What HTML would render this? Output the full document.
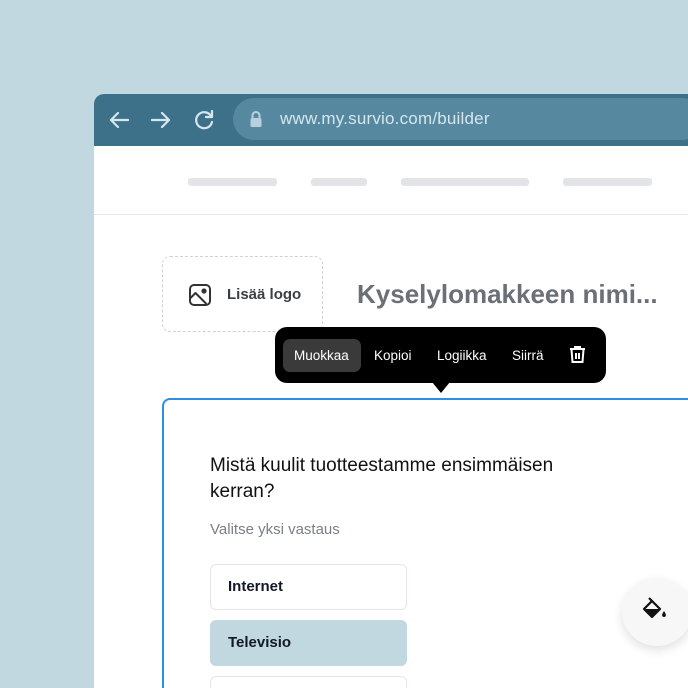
<!DOCTYPE html>
<html><head><meta charset="utf-8"><style>
*{margin:0;padding:0;box-sizing:border-box}
html,body{width:688px;height:688px;overflow:hidden}
body{background:#c2d8e0;font-family:"Liberation Sans",sans-serif}
#w{position:relative;width:688px;height:688px;overflow:hidden}
.abs{position:absolute}
.bar{left:94px;top:94px;width:600px;height:52px;background:#3d7189;border-radius:10px 0 0 0}
.addr{left:233px;top:98px;width:470px;height:42px;background:#5689a0;border-radius:21px}
.url{left:280px;top:109px;font-size:17px;color:#d6e6ee;letter-spacing:.2px}
.page{left:94px;top:146px;width:600px;height:542px;background:#fff}
.ph{top:178px;height:8px;background:#e3e4e8;border-radius:3px}
.div{left:94px;top:214px;width:600px;height:1px;background:#e5e7eb}
.logo{left:162px;top:256px;width:161px;height:76px;border:1.5px dashed #cfd2d6;border-radius:8px}
.title{left:357px;top:279px;font-size:26px;font-weight:bold;color:#6b7078}
.tb{left:275px;top:327px;width:331px;height:56px;background:#000;border-radius:12px}
.tb span{position:absolute;top:21px;color:#fff;font-size:13.5px}
.card{left:162px;top:398px;width:560px;height:320px;border:2px solid #2e8fe0;border-radius:8px}
.q{left:210px;top:453px;font-size:19px;line-height:26px;color:#111}
.sub{left:210px;top:521px;font-size:15px;color:#7a7f86}
.opt{left:210px;width:197px;height:46px;border:1.5px solid #e3e5ea;border-radius:6px;font-size:15px;font-weight:bold;color:#111827;padding:13px 0 0 17px}
</style></head><body><div id="w">
<div class="abs bar"></div>
<div class="abs addr"></div>
<svg class="abs" style="left:108px;top:108px" width="120" height="26" viewBox="0 0 120 26" fill="none" stroke="#d6e6ee" stroke-width="2.2" stroke-linecap="round" stroke-linejoin="round">
<path d="M3 12h17M10 5l-7 7 7 7"/>
<path d="M44 12h17M54 5l7 7-7 7"/>
<path d="M103 8a8 8 0 1 0 1 6"/><path d="M104 3v6h-6"/>
</svg>
<svg class="abs" style="left:249px;top:110px" width="14" height="18" viewBox="0 0 14 18"><path d="M3.5 8V5.5a3.5 3.5 0 0 1 7 0V8" fill="none" stroke="#b8d0dc" stroke-width="2"/><rect x="1.5" y="8" width="11" height="9" rx="1.5" fill="#b8d0dc"/></svg>
<div class="abs url">www.my.survio.com/builder</div>
<div class="abs page"></div>
<div class="abs ph" style="left:188px;width:89px"></div>
<div class="abs ph" style="left:311px;width:56px"></div>
<div class="abs ph" style="left:401px;width:128px"></div>
<div class="abs ph" style="left:563px;width:89px"></div>
<div class="abs div"></div>
<div class="abs logo"></div>
<svg class="abs" style="left:188px;top:283px" width="24" height="24" viewBox="0 0 24 24" fill="none" stroke="#333" stroke-width="2" stroke-linejoin="round"><rect x="2" y="2" width="20" height="20" rx="4"/><path d="M2.5 15l5-5 11 11"/><circle cx="16" cy="8" r="1.6" fill="#333"/></svg>
<div class="abs" style="left:227px;top:286px;font-size:15px;font-weight:bold;color:#3b3f45">Lisää logo</div>
<div class="abs title">Kyselylomakkeen nimi...</div>
<div class="abs tb">
<div class="abs" style="left:8px;top:12px;width:78px;height:33px;background:#3a3a3a;border-radius:7px"></div>
<span style="left:19px">Muokkaa</span>
<span style="left:99px">Kopioi</span>
<span style="left:162px">Logiikka</span>
<span style="left:237px">Siirrä</span>
<svg class="abs" style="left:294px;top:19px" width="17" height="18" viewBox="0 0 17 18" fill="none" stroke="#fff" stroke-width="2"><path d="M1 3h15M6 3V1h5v2"/><path d="M2.5 3.5l1 12.5h10l1-12.5"/><path d="M7 7v6M10 7v6"/></svg>
</div>
<div class="abs" style="left:432px;top:382px;width:0;height:0;border-left:9px solid transparent;border-right:9px solid transparent;border-top:11px solid #000"></div>
<div class="abs card"></div>
<div class="abs q">Mistä kuulit tuotteestamme ensimmäisen<br>kerran?</div>
<div class="abs sub">Valitse yksi vastaus</div>
<div class="abs opt" style="top:564px;background:#fff">Internet</div>
<div class="abs opt" style="top:620px;background:#c2d8e0;border-color:#c2d8e0">Televisio</div>
<div class="abs opt" style="top:676px;background:#fff"></div>
<div class="abs" style="left:622px;top:578px;width:70px;height:68px;border-radius:50%;background:#f7f7f7;box-shadow:0 4px 10px rgba(0,0,0,.12)"></div>
<svg class="abs" style="left:642px;top:597px" width="34" height="30" viewBox="0 0 34 30"><path d="M7 1l3 3" stroke="#111" stroke-width="2.2"/><path d="M10 4L2 12l8 8 8-8z" fill="none" stroke="#111" stroke-width="2.2" stroke-linejoin="round"/><path d="M3 12h15l-8 8z" fill="#111"/><path d="M22 14c-2.5 3.5-2.5 6 0 6s2.5-2.5 0-6z" fill="#111"/></svg>
</div></body></html>
